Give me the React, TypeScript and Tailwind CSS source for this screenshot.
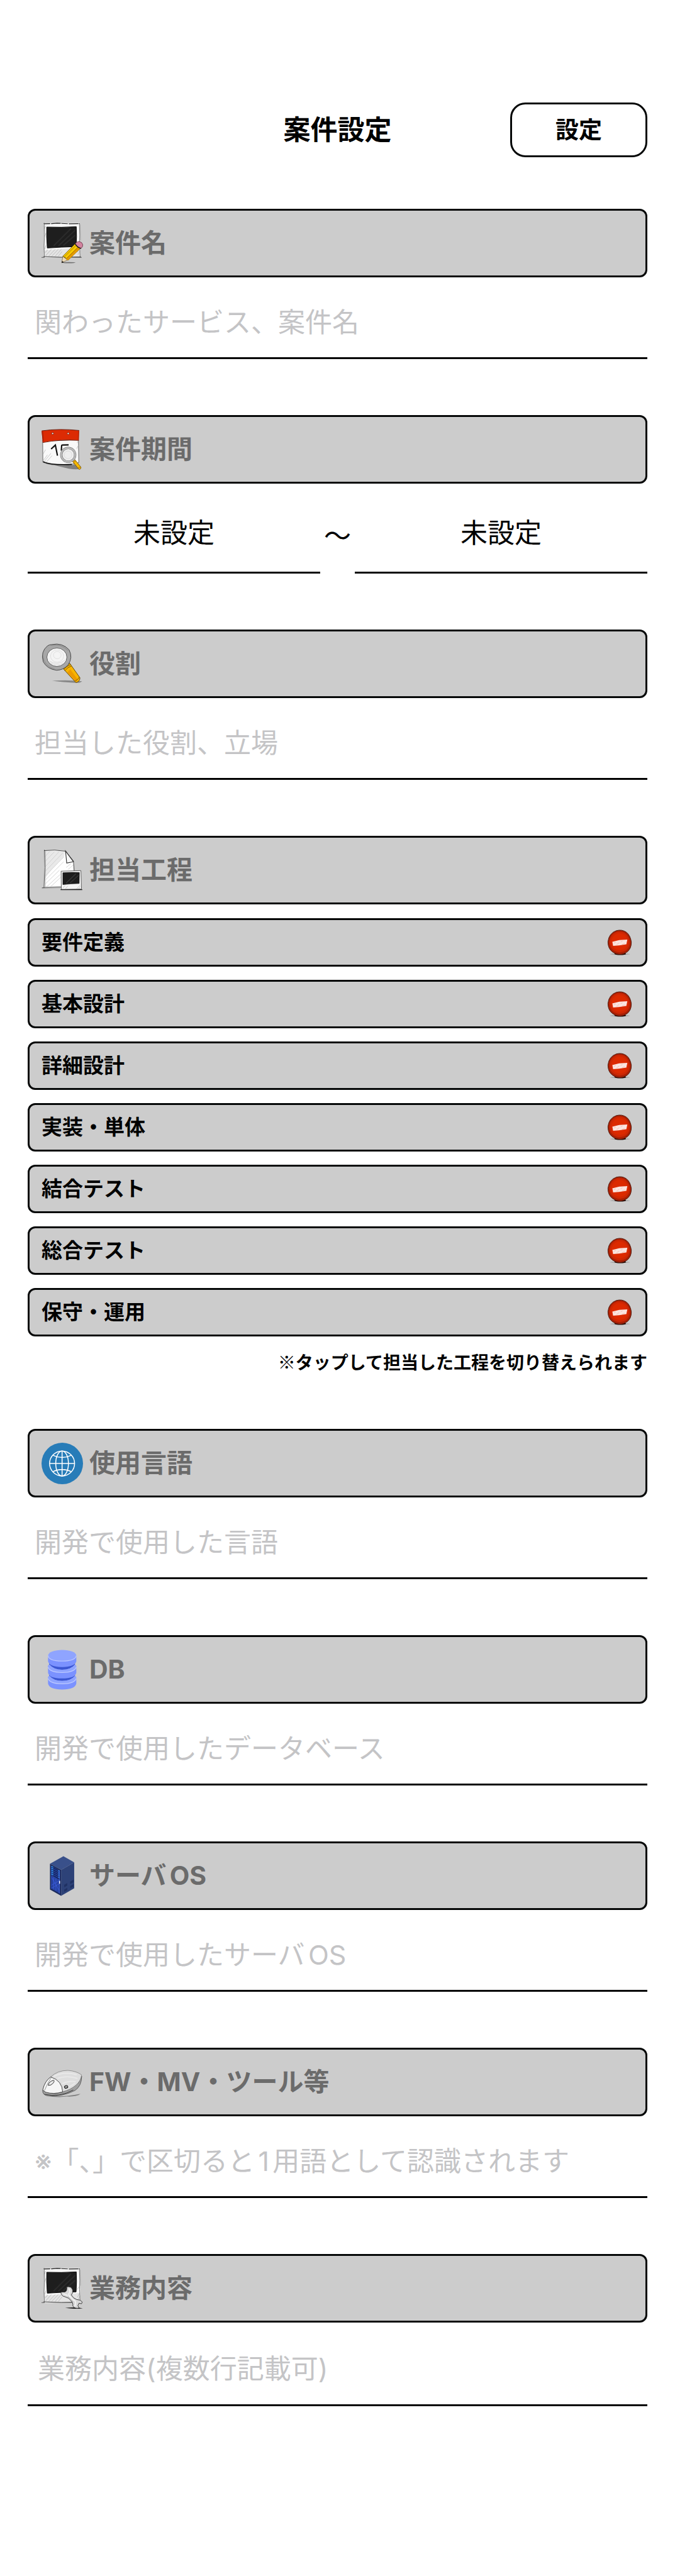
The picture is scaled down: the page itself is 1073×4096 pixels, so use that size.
import React, { useId } from "react";

function PhotoFrame() {
  return (
    <g>
      <path d="M97 268H306" stroke="#555" strokeWidth="4" opacity=".7" />
      <path d="M108 90L296 89L299 267L110 270Z" fill="#f8f8f8" />
      <path d="M112 232L294 218L297 264L112 267Z" fill="#e4e4e4" />
      <path
        d="M114 245l16-18M118 260l30-34M134 262l34-36M150 262l34-36M168 262l32-36M184 262l20-24M114 225l6-20M282 200l10-14M284 240l12-22M286 255l12-22M112 120l8-18M112 160l8-18"
        stroke="#a5a5a5"
        strokeWidth="2"
      />
      <path d="M108 93L150 92L178 90L240 93L296 92" fill="none" stroke="#222" strokeWidth="4" strokeDasharray="34 5 50 3" />
      <path d="M111 88L113 150L110 210L112 270M294 90L296 150L295 200L298 268" fill="none" stroke="#555" strokeWidth="2.5" />
      <path d="M108 100L111 240M298 96L300 180" stroke="#888" strokeWidth="1.5" />
      <path d="M106 264L200 267L302 265" fill="none" stroke="#333" strokeWidth="3" />
      <path d="M124 110Q200 113 278 108Q281 160 277 212Q200 214 127 219Q122 160 124 110Z" fill="#1e1e1e" stroke="#000" strokeWidth="3" />
      <path d="M160 208L250 118M185 208L272 126M210 206L272 152" stroke="#2b2b2b" strokeWidth="7" />
    </g>
  );
}

function PhotoPencilIcon() {
  return (
    <svg viewBox="97 87 216 216" className="size-[66px] shrink-0" aria-hidden="true">
      <PhotoFrame />
      <ellipse cx="238" cy="295" rx="36" ry="3" fill="#222" opacity=".55" />
      <path d="M202 296L208 262L232 282Z" fill="#ecd9b8" stroke="#5b4520" strokeWidth="2" />
      <path d="M202 297L204 287L213 292Z" fill="#111" />
      <path d="M208 262L272 197Q290 204 302 218L235 283Q224 268 208 262Z" fill="#f8c900" stroke="#5a4300" strokeWidth="2.5" />
      <path d="M222 276L292 208L302 218L235 283Z" fill="#e49b00" />
      <path d="M216 265L281 201M227 274L292 210" stroke="#7c5900" strokeWidth="2" />
      <path d="M272 197Q280 186 292 185Q308 187 312 202Q313 212 302 222Q282 218 272 197Z" fill="#d2839f" stroke="#5d2c3d" strokeWidth="2.5" />
      <path d="M272 197Q283 216 302 221" fill="none" stroke="#151515" strokeWidth="4" />
    </svg>
  );
}

function CalendarIcon() {
  return (
    <svg viewBox="97 87 216 216" className="size-[66px] shrink-0" aria-hidden="true">
      <path d="M104 262Q160 285 250 276L280 270L300 296Q270 300 240 294" fill="#222" opacity=".45" />
      <path d="M103 146Q200 150 289 142L291 262Q250 275 190 276Q140 274 104 256Z" fill="#f9f9f9" stroke="#444" strokeWidth="2.5" />
      <path d="M104 258Q150 277 255 272" fill="none" stroke="#111" strokeWidth="6" />
      <path d="M106 252L128 222M110 258L146 214M120 262L152 226M282 160L289 148M280 190L290 170M104 220L118 195" stroke="#aaa" strokeWidth="2" />
      <path d="M98 97Q190 84 293 95L291 146Q190 140 103 157Z" fill="#dc2b04" />
      <path d="M98 97Q190 84 293 95M291 147Q190 141 103 158" fill="none" stroke="#601203" strokeWidth="3" />
      <path d="M99 100L105 154M103 100L107 150M290 98L289 145" stroke="#a01c02" strokeWidth="3" />
      <circle cx="155" cy="111" r="5" fill="#eee" stroke="#661100" strokeWidth="2.5" />
      <circle cx="236" cy="111" r="5" fill="#eee" stroke="#661100" strokeWidth="2.5" />
      <path d="M147 192L169 171L180 226M203 171L238 170M202 170L200 200" fill="none" stroke="#111" strokeWidth="7" />
      <path d="M258 256L272 248L302 286Q304 296 292 298Z" fill="#f5b800" stroke="#694600" strokeWidth="2.5" />
      <path d="M262 262L276 253M286 292L300 283" stroke="#a06c00" strokeWidth="3" />
      <circle cx="236" cy="222" r="36" fill="#eee" stroke="#666" strokeWidth="12" />
      <circle cx="236" cy="222" r="36" fill="none" stroke="#b9b9b9" strokeWidth="9" />
      <circle cx="235" cy="222" r="20" fill="none" stroke="#dadada" strokeWidth="3" />
    </svg>
  );
}

function MagnifierIcon() {
  return (
    <svg viewBox="97 87 216 216" className="size-[66px] shrink-0" aria-hidden="true">
      <path d="M152 282Q230 275 308 284Q300 294 270 292Q210 290 152 282Z" fill="#444" opacity=".5" />
      <path d="M209 218Q222 198 244 191L297 266Q297 286 276 291Z" fill="#f8b500" stroke="#5e4100" strokeWidth="3" />
      <path d="M232 238L246 221L286 276L276 286Z" fill="#e68c00" opacity=".65" />
      <path d="M212 224Q225 205 248 198M218 230Q230 212 252 205M272 282Q287 278 294 262" fill="none" stroke="#7a5600" strokeWidth="3" />
      <path d="M151 93Q205 82 240 120Q262 160 235 200Q210 226 175 227Q127 221 106 183Q91 130 128 100Q138 93 151 93Z" fill="#a7a7a7" stroke="#3e3e3e" strokeWidth="3" />
      <path d="M147 98Q200 88 234 124M104 150Q110 205 165 221" fill="none" stroke="#777" strokeWidth="2" />
      <ellipse cx="177" cy="159" rx="52" ry="48" fill="#f4f4f4" stroke="#555" strokeWidth="3" />
      <ellipse cx="178" cy="153" rx="34" ry="32" fill="none" stroke="#dcdcdc" strokeWidth="3" />
      <ellipse cx="179" cy="148" rx="20" ry="19" fill="none" stroke="#dcdcdc" strokeWidth="3" />
      <path d="M137 178Q178 206 220 174M142 188Q178 210 212 188" fill="none" stroke="#d5d5d5" strokeWidth="3" />
    </svg>
  );
}

function DocumentIcon() {
  return (
    <svg viewBox="97 87 216 216" className="size-[66px] shrink-0" aria-hidden="true">
      <path d="M111 92Q165 86 222 94L265 150L266 284L110 286Z" fill="#fff" />
      <path d="M111 92L222 94L216 120L150 190L112 240Z" fill="#e9e9e9" />
      <path
        d="M114 125L140 96M114 150L164 98M116 176L188 98M116 200L208 104M116 224L214 124M116 246L212 150M116 266L190 194M124 280L194 216M144 280L198 230M225 180L250 160M235 190L264 166"
        stroke="#c9c9c9"
        strokeWidth="2.5"
      />
      <path d="M110 92Q165 85 222 95L263 146L267 200M112 88L114 180L110 286M99 286L200 283" fill="none" stroke="#3b3b3b" strokeWidth="3" />
      <path d="M118 94L117 282M106 280L200 278" fill="none" stroke="#888" strokeWidth="2" />
      <path d="M222 94L263 150L228 157Z" fill="#f7f7f7" stroke="#2b2b2b" strokeWidth="3.5" />
      <path d="M199 199L302 196L305 292L200 294Z" fill="#f4f4f4" stroke="#555" strokeWidth="3" />
      <path d="M196 295L309 295" stroke="#222" strokeWidth="4" />
      <path d="M208 207Q250 204 294 206L293 263Q250 264 208 269Z" fill="#1d1d1d" stroke="#000" strokeWidth="2" />
      <path d="M224 262L276 212M246 260L290 220" stroke="#3a3a3a" strokeWidth="4" />
      <path d="M206 289l14-16M222 290l12-14M280 290l18-18M290 290l10-12" stroke="#b5b5b5" strokeWidth="2" />
    </svg>
  );
}

function GlobeIcon() {
  return (
    <svg viewBox="97 90 216 216" className="size-[66px] shrink-0" aria-hidden="true">
      <circle cx="205" cy="198" r="108" fill="#277cb8" />
      <g fill="none" stroke="#fff" strokeWidth="5">
        <circle cx="204" cy="198" r="65" />
        <ellipse cx="204" cy="198" rx="33" ry="65" />
        <path d="M204 133V263M139 198H269M155 155Q204 179 253 155M155 241Q204 217 253 241" />
      </g>
    </svg>
  );
}

function DatabaseIcon() {
  return (
    <svg viewBox="97 90 216 216" className="size-[66px] shrink-0" aria-hidden="true">
      <path d="M137 158H271V262H137Z" fill="#3c57d2" />
      <path d="M131 241Q131 230 139 231Q160 256 204 256Q250 256 270 231Q278 232 278 241V270Q272 300 204 301Q137 300 131 270Z" fill="#7b92ff" />
      <path d="M131 243Q131 230 139 231Q160 256 204 256Q250 256 270 231Q278 232 278 243Q268 271 204 271Q140 271 131 243Z" fill="#8fa4ff" />
      <path d="M131 243Q140 271 204 271Q268 271 278 243" fill="none" stroke="#bcc8ff" strokeWidth="4" />
      <path d="M131 182Q131 171 139 172Q160 198 204 198Q250 198 270 172Q278 173 278 182V214Q270 243 204 243Q138 243 131 214Z" fill="#7b92ff" />
      <path d="M131 184Q131 171 139 172Q160 198 204 198Q250 198 270 172Q278 173 278 184Q268 212 204 212Q140 212 131 184Z" fill="#8fa4ff" />
      <path d="M131 184Q140 212 204 212Q268 212 278 184" fill="none" stroke="#bcc8ff" strokeWidth="4" />
      <path d="M131 124H278V155Q270 183 204 184Q138 183 131 155Z" fill="#7b92ff" />
      <ellipse cx="204.500" cy="124" rx="73.500" ry="29" fill="#8fa4ff" />
      <path d="M131 124Q134 153 204 153Q274 153 278 124" fill="none" stroke="#bcc8ff" strokeWidth="4" />
    </svg>
  );
}

function ServerIcon() {
  return (
    <svg viewBox="97 90 216 216" className="size-[66px] shrink-0" aria-hidden="true">
      <path d="M141 134L211 95L267 127L199 166Z" fill="#39508a" />
      <path d="M199 166L267 127V262L199 301Z" fill="#2d4278" />
      <path d="M141 134L199 166V301L141 268Z" fill="#1d2c5c" />
      <path d="M146 144L193 171V290L146 263Z" fill="#2742a0" />
      <path d="M148 150l42 24M148 160l42 24M148 170l42 24M148 180l42 24M148 190l42 24" stroke="#142150" strokeWidth="4" />
      <path d="M148 147l10 6M148 157l10 6M148 167l10 6M148 177l10 6M148 187l10 6M184 169l7 4M184 180l7 4M184 191l7 4M184 202l7 4" stroke="#35a2ff" strokeWidth="4" />
      <path d="M160 205V268M172 212V274M148 246L190 222M148 262L190 238M150 206L188 272" stroke="#3c5fdf" strokeWidth="2.500" />
      <path d="M189 168V288" stroke="#4466dc" strokeWidth="3" />
      <path d="M191 223V238" stroke="#f1f5ff" strokeWidth="5" />
      <path d="M215 244L231 235V248L215 257ZM246 227L264 217V230L246 240ZM215 268L231 259V272L215 281ZM246 250L264 240V253L246 263Z" fill="#203264" />
    </svg>
  );
}

function MouseIcon() {
  return (
    <svg viewBox="97 90 216 216" className="size-[66px] shrink-0" aria-hidden="true">
      <path d="M110 264Q190 280 300 258Q280 274 230 272Q170 280 110 264Z" fill="#333" opacity=".5" />
      <path d="M103 238Q100 266 135 269Q205 274 272 240Q306 216 306 166L290 200Q240 246 170 256Q125 255 103 238Z" fill="#a0a0a0" stroke="#444" strokeWidth="2.5" />
      <path d="M145 170Q180 136 234 136Q278 139 305 159Q303 190 276 213Q250 236 206 248Q200 200 145 170Z" fill="#dedede" stroke="#666" strokeWidth="2" />
      <path d="M160 168Q210 140 280 158M180 178Q230 160 284 178M205 205Q240 188 275 195M212 232Q245 222 272 202" fill="none" stroke="#e9e9e9" strokeWidth="6" />
      <path d="M145 170Q205 190 207 248Q160 262 120 250Q104 244 104 235Q114 192 145 170Z" fill="#f6f6f6" stroke="#3a3a3a" strokeWidth="3" />
      <path d="M112 242Q124 210 148 172" fill="none" stroke="#555" strokeWidth="2" />
      <path d="M132 214Q132 196 160 187Q166 190 158 202Q146 216 132 214Z" fill="#ececec" stroke="#222" strokeWidth="3" />
      <ellipse cx="225" cy="222" rx="9" ry="7" fill="#999" stroke="#222" strokeWidth="3.500" transform="rotate(-20 225 222)" />
      <path d="M112 260Q190 278 262 238" fill="none" stroke="#333" strokeWidth="3" />
    </svg>
  );
}

function PhotoWrenchIcon() {
  return (
    <svg viewBox="97 87 216 216" className="size-[66px] shrink-0" aria-hidden="true">
      <PhotoFrame />
      <path d="M220 296Q260 290 312 297Q270 303 220 296Z" fill="#111" />
      <path
        d="M228 186Q253 182 259 203Q262 219 252 228Q262 246 280 252Q301 252 309 265L305 274L292 271L286 284L293 296Q270 301 260 286Q262 268 250 258Q240 242 220 238Q198 234 198 213L218 213Q232 208 228 186Z"
        fill="#d8d8d8"
        stroke="#333"
        strokeWidth="3"
        strokeLinejoin="round"
      />
      <path d="M240 196Q250 210 238 224Q254 250 272 260Q278 270 270 286M210 222Q230 228 244 238" fill="none" stroke="#f5f5f5" strokeWidth="5" />
      <path d="M233 232Q246 254 262 264" fill="none" stroke="#999" strokeWidth="2" />
    </svg>
  );
}

function MinusIcon() {
  return (
    <svg viewBox="177 97 144 144" className="size-[44px] shrink-0" aria-hidden="true">
      <ellipse cx="251" cy="228" rx="52" ry="4" fill="#555" opacity=".3" />
      <ellipse cx="252" cy="227" rx="30" ry="6" fill="#1c0500" />
      <path d="M232 106Q262 98 285 115Q305 131 310 165Q311 199 288 217Q270 230 251 230Q230 230 212 217Q188 200 188 164Q193 119 232 106Z" fill="#a82005" stroke="#4a170c" strokeWidth="3" />
      <path d="M236 112Q262 108 281 122Q298 138 302 166Q302 193 282 209Q252 228 219 210Q197 194 196 164Q200 124 236 112Z" fill="#ce2703" />
      <path d="M240 120Q262 118 277 131Q292 146 293 168Q290 190 274 202Q250 214 225 202Q206 188 205 164Q210 130 240 120Z" fill="#dc2a00" />
      <path d="M211 164L247 155L289 153L284 177L246 183L215 185Z" fill="#fbe4df" />
      <path d="M217 172L229 166M233 179L247 169M254 166L264 161M262 178L276 172" stroke="#efaa9b" strokeWidth="2" />
    </svg>
  );
}

const cardClass = "border-[3px] border-[#050707] bg-[#ccc] rounded-xl";

function SectionLabel({ icon, text, htmlFor }: { icon: React.ReactNode; text: string; htmlFor?: string }) {
  const className = `${cardClass} flex h-[109px] items-center gap-2.5 px-[19px] text-[41px] font-bold text-[#6b6b6b]`;
  return htmlFor ? (
    <label htmlFor={htmlFor} className={className}>
      {icon}
      <span>{text}</span>
    </label>
  ) : (
    <h2 className={className}>
      {icon}
      <span>{text}</span>
    </h2>
  );
}

function Field({ icon, label, placeholder }: { icon: React.ReactNode; label: string; placeholder: string }) {
  const id = useId();
  return (
    <section className="flex flex-col">
      <SectionLabel icon={icon} text={label} htmlFor={id} />
      <input
        id={id}
        type="text"
        placeholder={placeholder}
        className="h-[130px] w-full border-b-[3px] border-black px-[11px] pt-3.5 text-[43px] outline-none placeholder:text-[#c4c4c6] placeholder:opacity-100"
      />
    </section>
  );
}

const phases = ["要件定義", "基本設計", "詳細設計", "実装・単体", "結合テスト", "総合テスト", "保守・運用"];

export default function App() {
  return (
    <main
      lang="ja"
      className="min-h-screen bg-white px-11 pt-[163px] pb-32 text-black [font-family:Inter,'Noto_Sans_CJK_JP',sans-serif] [text-autospace:normal]"
    >
      <header className="grid grid-cols-[1fr_auto_1fr] items-center">
        <h1 className="col-start-2 text-[43px] leading-none font-bold">案件設定</h1>
        <button type="button" className="h-[87px] w-[218px] justify-self-end rounded-3xl border-[3px] border-[#050707] text-[37px] leading-none font-bold">
          設定
        </button>
      </header>

      <form className="mt-[82px] flex flex-col gap-[89px]">
        <Field icon={<PhotoPencilIcon />} label="案件名" placeholder="関わったサービス、案件名" />

        <section>
          <SectionLabel icon={<CalendarIcon />} text="案件期間" />
          <div className="flex items-stretch text-[43px]">
            <button type="button" aria-label="開始日 未設定" className="h-[143px] flex-1 border-b-[3px] border-black pt-4">
              未設定
            </button>
            <span className="flex w-[55px] items-center justify-center pt-6">〜</span>
            <button type="button" aria-label="終了日 未設定" className="h-[143px] flex-1 border-b-[3px] border-black pt-4">
              未設定
            </button>
          </div>
        </section>

        <Field icon={<MagnifierIcon />} label="役割" placeholder="担当した役割、立場" />

        <section>
          <SectionLabel icon={<DocumentIcon />} text="担当工程" />
          <ul className="mt-[22px] flex flex-col gap-[21px]">
            {phases.map((phase) => (
              <li key={phase}>
                <button type="button" className={`${cardClass} flex h-[77px] w-full items-center justify-between px-[19px] text-[33px] font-bold`}>
                  <span>{phase}</span>
                  <MinusIcon />
                </button>
              </li>
            ))}
          </ul>
          <p className="pt-[22px] text-right text-[28px] leading-9 font-bold [font-family:'Noto_Sans_CJK_JP',sans-serif]">
            ※タップして担当した工程を切り替えられます
          </p>
        </section>

        <Field icon={<GlobeIcon />} label="使用言語" placeholder="開発で使用した言語" />
        <Field icon={<DatabaseIcon />} label="DB" placeholder="開発で使用したデータベース" />
        <Field icon={<ServerIcon />} label="サーバOS" placeholder="開発で使用したサーバOS" />
        <Field icon={<MouseIcon />} label="FW・MV・ツール等" placeholder="※「、」で区切ると1用語として認識されます" />

        <section className="flex flex-col">
          <SectionLabel icon={<PhotoWrenchIcon />} text="業務内容" htmlFor="details" />
          <textarea
            id="details"
            rows={1}
            placeholder="業務内容(複数行記載可)"
            className="h-[133px] w-full resize-none overflow-hidden border-b-[3px] border-black px-4 pt-10 text-[43px] leading-[66px] outline-none placeholder:text-[#c4c4c6] placeholder:opacity-100"
          />
        </section>
      </form>
    </main>
  );
}
